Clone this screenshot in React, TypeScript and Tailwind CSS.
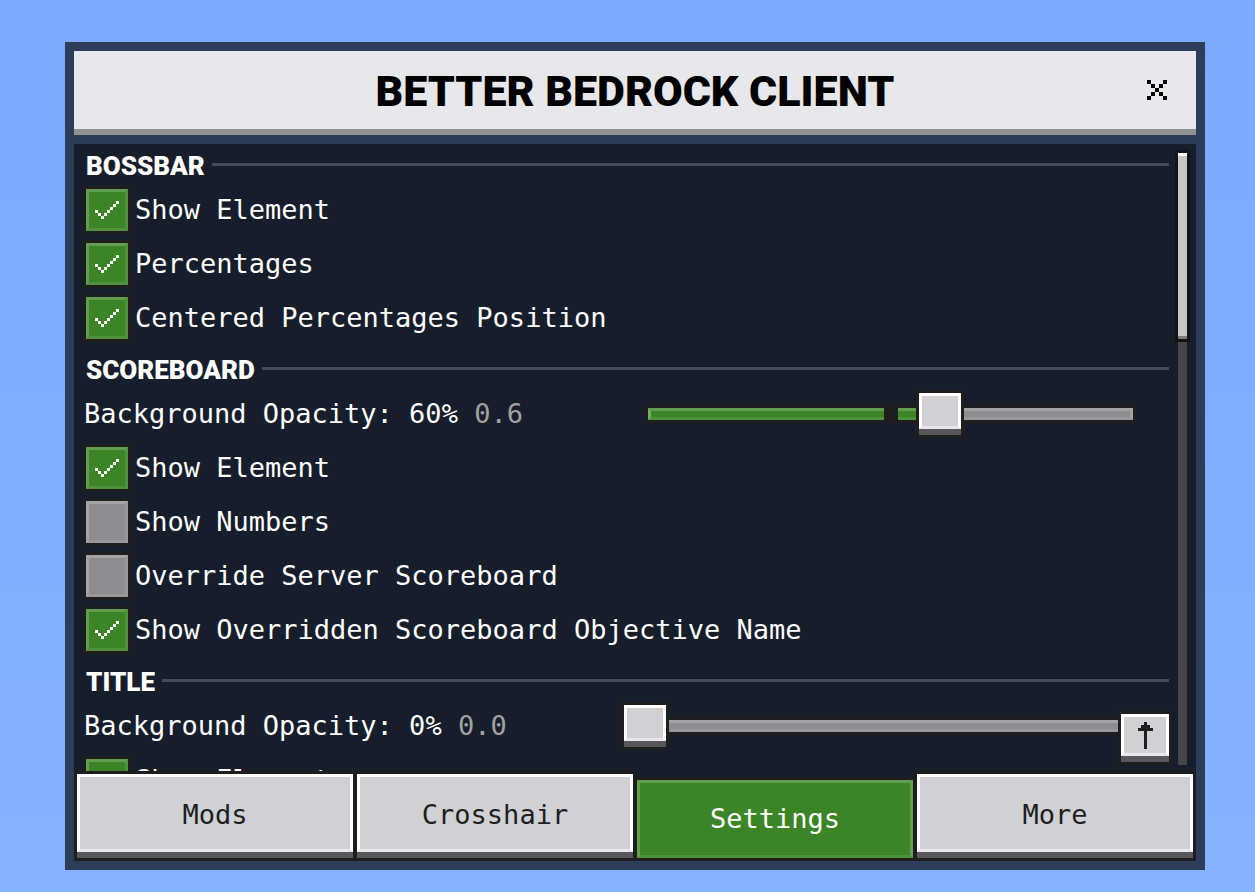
import { useState, type ReactNode } from 'react';

function PixelArt({ cells, cols, rows, className }: { cells: number[][]; cols: number; rows: number; className: string }) {
  return (
    <svg viewBox={`0 0 ${cols} ${rows}`} className={className} fill="currentColor" shapeRendering="crispEdges" aria-hidden="true">
      {cells.map(([x, y, w = 1, h = 1]) => (
        <rect key={`${x}-${y}`} x={x} y={y} width={w} height={h} />
      ))}
    </svg>
  );
}

const CROSS = [[0, 0], [4, 0], [1, 1], [3, 1], [2, 2], [1, 3], [3, 3], [0, 4], [4, 4]];
const CHECK = [[7, 0], [6, 1], [5, 2], [0, 3], [4, 3], [1, 4], [3, 4], [2, 5]];
const ARROW = [[2, 0, 1, 9], [1, 1, 3, 1], [0, 2, 5, 1]];

function Section({ title, children }: { title: string; children: ReactNode }) {
  return (
    <section>
      <div className="flex h-[39px] items-center gap-[7px] pt-[2px] pl-[3px]">
        <h2 className="pt-[3px] font-[Roboto,sans-serif] text-[26px] leading-none font-black text-white">{title}</h2>
        <div className="h-[3px] flex-1 bg-[#474b57]" />
      </div>
      {children}
    </section>
  );
}

function CheckRow({ label, initial = false }: { label: string; initial?: boolean }) {
  const [checked, setChecked] = useState(initial);
  return (
    <label className="flex h-[54px] items-center gap-1 whitespace-nowrap">
      <span className="grid size-12 shrink-0 place-items-center border-3 border-[#1e1e1f]">
        <input
          type="checkbox"
          checked={checked}
          onChange={(e) => setChecked(e.target.checked)}
          className="col-start-1 row-start-1 size-[42px] appearance-none border-3 border-t-[#a4a4a6] border-r-[#98989b] border-b-[#98989b] border-l-[#a4a4a6] bg-[#8c8d90] checked:border-t-[#639d52] checked:border-r-[#4f913c] checked:border-b-[#4f913c] checked:border-l-[#639d52] checked:bg-[#3c8527]"
        />
        {checked && (
          <PixelArt cells={CHECK} cols={8} rows={6} className="pointer-events-none z-10 col-start-1 row-start-1 h-[18px] w-6" />
        )}
      </span>
      {label}
    </label>
  );
}

function SliderRow({ id, initial }: { id: string; initial: number }) {
  const [value, setValue] = useState(initial);
  return (
    <div className="flex h-[54px] items-center justify-between pr-[33px] pl-[1px] whitespace-nowrap">
      <label htmlFor={id}>
        Background Opacity: {value}% <span className="text-[#a2a2a3]">{(value / 100).toFixed(1)}</span>
      </label>
      <div className="relative flex h-12 w-[491px] items-center">
        <div className="relative h-[18px] flex-1 border-3 border-[#1e1e1f]">
          <div className="h-full border-y-3 border-r-3 border-t-[#a4a4a6] border-r-[#a4a4a6] border-b-[#98989b] bg-[#8c8d90]" />
          <div
            className="absolute inset-y-0 left-0 overflow-hidden"
            style={{ width: `${value}%` }}
          >
            <div className="h-full border-y-3 border-l-3 border-t-[#639d52] border-b-[#4f913c] border-l-[#77aa68] bg-[#3c8527]" />
          </div>
          {value > 0 && <div className="absolute inset-y-0 left-1/2 w-3.5 -translate-x-1/2 bg-[#1e1e1f]" />}
        </div>
        <div
          className="absolute top-0 h-12 w-12 -translate-x-1/2 border-3 border-[#1e1e1f] bg-[#58585a] pb-[6px]"
          style={{ left: `${value}%` }}
        >
          <div className="h-full border-3 border-white border-b-[#e6e8eb] bg-[#d0d1d4]" />
        </div>
        <input
          id={id}
          type="range"
          min={0}
          max={100}
          step={10}
          value={value}
          onChange={(e) => setValue(Number(e.target.value))}
          className="absolute inset-0 h-full w-full cursor-pointer opacity-0"
        />
      </div>
    </div>
  );
}

const TABS = ['Mods', 'Crosshair', 'Settings', 'More'];

function TabBar() {
  const [active, setActive] = useState('Settings');
  return (
    <nav className="grid h-[90px] shrink-0 grid-cols-4 border-x border-[#1e1e1f]">
      {TABS.map((tab) =>
        tab === active ? (
          <button key={tab} type="button" aria-current="page" className="mt-[6px] border-x-2 border-y-3 border-[#1e1e1f] text-white">
            <span className="flex h-full items-center justify-center border-3 border-[#639d52] border-b-[#4f913c] bg-[#3c8527]">{tab}</span>
          </button>
        ) : (
          <button
            key={tab}
            type="button"
            onClick={() => setActive(tab)}
            className="border-x-2 border-y-3 border-[#1e1e1f] bg-[#58585a] pb-[6px] text-[#1e1e1f]"
          >
            <span className="flex h-full items-center justify-center border-3 border-white border-b-[#e6e8eb] bg-[#d0d1d4] pt-1">{tab}</span>
          </button>
        ),
      )}
    </nav>
  );
}

export default function App() {
  return (
    <div className="flex h-screen flex-col bg-linear-to-b from-[#7ba9ff] to-[#86b2ff] pt-[42px] pr-[50px] pb-[22px] pl-[65px] font-['DejaVu_Sans_Mono',monospace] text-[27px] leading-8">
      <main className="flex min-h-0 flex-1 flex-col gap-[9px] bg-[#2d3c59] p-[9px]">
        <header className="grid h-[84px] shrink-0 grid-cols-[60px_1fr_60px] items-center border-b-6 border-[#919191] bg-[#e6e8eb] px-[9px] text-black">
          <h1 className="col-start-2 pt-[2px] text-center font-[Roboto,sans-serif] text-[43px] leading-none font-black">BETTER BEDROCK CLIENT</h1>
          <button type="button" aria-label="Close" className="grid size-[60px] place-items-center">
            <PixelArt cells={CROSS} cols={5} rows={5} className="size-5" />
          </button>
        </header>

        <div className="flex min-h-0 flex-1 flex-col bg-[#171e2b]">
          <div className="relative flex min-h-0 flex-1 overflow-hidden">
            <div className="flex min-w-0 flex-1 flex-col gap-[3px] overflow-hidden pl-[9px] text-white">
              <Section title="BOSSBAR">
                <CheckRow label="Show Element" initial />
                <CheckRow label="Percentages" initial />
                <CheckRow label="Centered Percentages Position" initial />
              </Section>
              <Section title="SCOREBOARD">
                <SliderRow id="scoreboard-opacity" initial={60} />
                <CheckRow label="Show Element" initial />
                <CheckRow label="Show Numbers" />
                <CheckRow label="Override Server Scoreboard" />
                <CheckRow label="Show Overridden Scoreboard Objective Name" initial />
              </Section>
              <Section title="TITLE">
                <SliderRow id="title-opacity" initial={0} />
                <CheckRow label="Show Element" initial />
              </Section>
            </div>

            <div className="flex w-[27px] shrink-0 justify-center pt-[6px] pb-[6px]">
              <div className="flex w-[15px] flex-col items-center">
                <div className="h-48 w-full border-3 border-[#131313]">
                  <div className="h-full border-y-3 border-t-white border-b-[#7d7d7d] bg-[#c6c6c6]" />
                </div>
                <div className="w-[9px] flex-1 bg-[#464646]" />
              </div>
            </div>

            <button
              type="button"
              aria-label="Back to top"
              className="absolute right-6 bottom-[6px] h-[54px] w-[54px] border-3 border-[#1e1e1f] bg-[#58585a] pb-[6px] text-[#1e1e1f]"
            >
              <span className="flex h-full items-center justify-center border-3 border-white border-b-[#e6e8eb] bg-[#d0d1d4]">
                <PixelArt cells={ARROW} cols={5} rows={9} className="h-[27px] w-[15px]" />
              </span>
            </button>
          </div>
          <TabBar />
        </div>
      </main>
    </div>
  );
}
